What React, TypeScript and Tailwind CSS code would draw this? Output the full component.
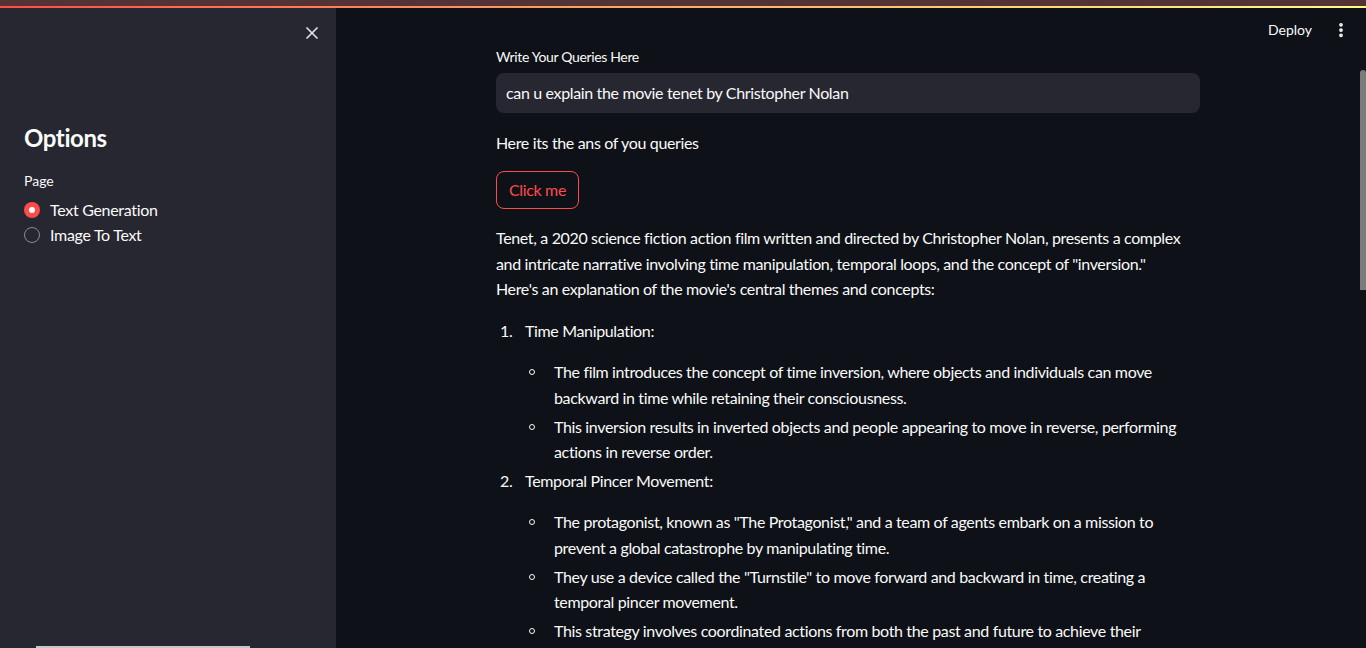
import { X, EllipsisVertical } from 'lucide-react';

const font = { fontFamily: 'Lato, "Open Sans", sans-serif' };

function Sidebar() {
  return (
    <aside className="w-[336px] shrink-0 bg-[#262730] flex flex-col px-6 relative">
      <div className="h-[50px] flex items-center justify-end -mr-[10px]">
        <X className="w-5 h-5 text-[#e6e6ea]" strokeWidth={2} />
      </div>
      <h2 className="mt-[66px] text-[24px] leading-[28px] font-bold text-[#fafafa] tracking-[-0.4px]">Options</h2>
      <div className="mt-[20px] text-[14px] leading-[18px] text-[#fafafa]">Page</div>
      <div className="mt-[11px] flex flex-col gap-[7px]">
        <label className="flex items-center gap-[10px] text-[16px] leading-[18px] text-[#fafafa] tracking-[-0.3px]">
          <span className="w-4 h-4 rounded-full bg-[#ff4b4b] flex items-center justify-center">
            <span className="w-[6px] h-[6px] rounded-full bg-white" />
          </span>
          Text Generation
        </label>
        <label className="flex items-center gap-[10px] text-[16px] leading-[18px] text-[#fafafa] tracking-[-0.3px]">
          <span className="w-4 h-4 rounded-full border border-[#8b8c93]" />
          Image To Text
        </label>
      </div>
      <div className="absolute bottom-0 left-[36px] w-[214px] h-[2px] bg-[#c6c6c6]" />
    </aside>
  );
}

function Bullet({ children }: { children: React.ReactNode }) {
  return (
    <li className="flex gap-0 mb-[3px]">
      <span className="w-[58px] shrink-0 flex justify-end pr-[19px] pt-[10px]">
        <span className="w-[6px] h-[6px] rounded-full border border-[#fafafa]" />
      </span>
      <span>{children}</span>
    </li>
  );
}

export default function App() {
  return (
    <div className="h-[648px] w-[1366px] overflow-hidden bg-[#0e1117] flex flex-col" style={font}>
      <div className="h-[6px] bg-[#533335] shrink-0" />
      <div className="h-[2px] shrink-0 bg-gradient-to-r from-[#ff4b4b] to-[#fffd80]" />
      <div className="flex flex-1 min-h-0">
        <Sidebar />
        <main className="flex-1 relative">
          <div className="absolute top-[11px] right-[16px] flex items-center gap-[20px]">
            <span className="text-[14px] text-[#fafafa]">Deploy</span>
            <EllipsisVertical className="w-[18px] h-[18px] text-[#fafafa]" strokeWidth={3} />
          </div>
          <div className="absolute right-0 top-[62px] w-[6px] h-[220px] rounded-t bg-[#7b7b7c]" />
          <div className="w-[704px] ml-[160px] pt-[40px] text-[#fafafa] tracking-[-0.35px]">
            <div className="text-[14px] leading-[18px] mb-[7px]">Write Your Queries Here</div>
            <div className="h-[40px] rounded-lg bg-[#262730] flex items-center px-[10px] text-[16px]">
              can u explain the movie tenet by Christopher Nolan
            </div>
            <p className="mt-[17px] text-[16px] leading-[26px]">Here its the ans of you queries</p>
            <button className="mt-[15px] h-[38px] px-[12px] rounded-lg border border-[#ff4b4b] text-[#ff4b4b] text-[16px]">
              Click me
            </button>
            <div className="mt-[16px] text-[16px] leading-[25.6px]">
              <p>
                Tenet, a 2020 science fiction action film written and directed by Christopher Nolan, presents a complex
                and intricate narrative involving time manipulation, temporal loops, and the concept of "inversion."
                <br />
                Here's an explanation of the movie's central themes and concepts:
              </p>
              <ol className="mt-[16px]">
                <li className="mb-[3px]">
                  <div className="flex">
                    <span className="w-[29px] shrink-0 pl-[4px]">1.</span>
                    <span>Time Manipulation:</span>
                  </div>
                  <ul className="mt-[16px]">
                    <Bullet>
                      The film introduces the concept of time inversion, where objects and individuals can move
                      backward in time while retaining their consciousness.
                    </Bullet>
                    <Bullet>
                      This inversion results in inverted objects and people appearing to move in reverse, performing
                      actions in reverse order.
                    </Bullet>
                  </ul>
                </li>
                <li className="mb-[3px]">
                  <div className="flex">
                    <span className="w-[29px] shrink-0 pl-[4px]">2.</span>
                    <span>Temporal Pincer Movement:</span>
                  </div>
                  <ul className="mt-[16px]">
                    <Bullet>
                      The protagonist, known as "The Protagonist," and a team of agents embark on a mission to
                      prevent a global catastrophe by manipulating time.
                    </Bullet>
                    <Bullet>
                      They use a device called the "Turnstile" to move forward and backward in time, creating a
                      temporal pincer movement.
                    </Bullet>
                    <Bullet>
                      This strategy involves coordinated actions from both the past and future to achieve their
                      objectives.
                    </Bullet>
                  </ul>
                </li>
              </ol>
            </div>
          </div>
        </main>
      </div>
    </div>
  );
}
